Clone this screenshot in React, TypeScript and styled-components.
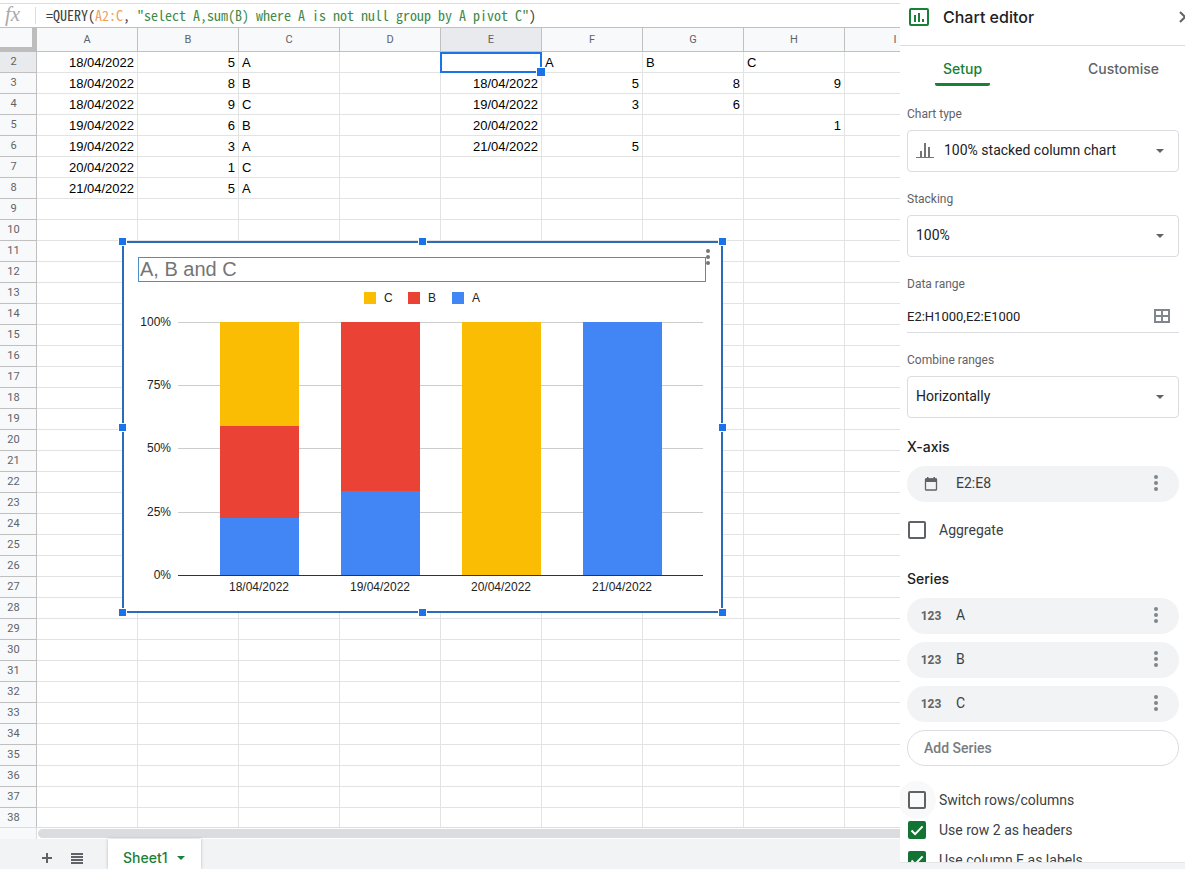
import React from "react";
import styled, { createGlobalStyle } from "styled-components";

const GlobalStyle = createGlobalStyle`
  * { box-sizing: border-box; }
  body { margin: 0; background: #fff; font-family: Roboto, Arial, sans-serif; color: #202124; }
  button, input, select { font: inherit; color: inherit; }
  button { border: 0; padding: 0; background: none; cursor: pointer; }
`;

const display = `Inter, Roboto, sans-serif`;

const Page = styled.div`
  display: flex;
  height: 100vh;
  overflow: hidden;
`;

/* ---------- spreadsheet ---------- */

const Workspace = styled.main`
  flex: 1;
  min-width: 0;
  display: flex;
  flex-direction: column;
  padding-top: 3px;
`;

const FormulaBar = styled.div`
  display: flex;
  align-items: center;
  flex: none;
  height: 25px;
  border-top: 1px solid #dadce0;
  border-bottom: 1px solid #c0c0c0;
  background: #fff;
`;

const Fx = styled.span`
  width: 36px;
  height: 17px;
  padding-left: 5px;
  border-right: 1px solid #dadce0;
  font: italic 21px/15px "Liberation Serif", serif;
  color: #a8abaf;
`;

const Formula = styled.code`
  padding: 0 0 2px 10px;
  font: 14px/20px "Noto Sans Mono CJK SC", "Liberation Mono", monospace;
  white-space: pre;
  color: #3c4043;
`;

const RangeToken = styled.span`
  color: #f0a060;
`;

const StringToken = styled.span`
  color: #3f8a4a;
`;

const Sheet = styled.div`
  position: relative;
  flex: 1;
  min-height: 0;
  overflow: hidden;
  border-bottom: 1px solid #dcdddf;
`;

const Grid = styled.table`
  width: 946px;
  table-layout: fixed;
  border-collapse: separate;
  border-spacing: 0;
  font: 13px/18px "Liberation Sans", Arial, sans-serif;
  color: #000;
`;

const Corner = styled.td`
  width: 37px;
  height: 24px;
  padding: 0;
  background: #f8f9fa;
  border-right: 5px solid #bdbdbd;
  border-bottom: 5px solid #bdbdbd;
`;

const ColumnHead = styled.th<{ $active: boolean }>`
  width: 101px;
  padding: 0;
  font: 11px/16px Roboto, sans-serif;
  color: #5f6368;
  background: ${(p) => (p.$active ? "#e8eaed" : "#f8f9fa")};
  border-right: 1px solid #c0c0c0;
  border-bottom: 1px solid #c0c0c0;
`;

const RowHead = styled.th<{ $active: boolean }>`
  height: 21px;
  padding: 0 9px 0 0;
  font: 11px/16px Roboto, sans-serif;
  color: #5f6368;
  background: ${(p) => (p.$active ? "#e8eaed" : "#f8f9fa")};
  border-right: 1px solid #c0c0c0;
  border-bottom: 1px solid #c0c0c0;
`;

const Cell = styled.td<{ $numeric: boolean }>`
  position: relative;
  height: 21px;
  padding: 2px 3px 0;
  text-align: ${(p) => (p.$numeric ? "right" : "left")};
  border-right: 1px solid #e2e3e3;
  border-bottom: 1px solid #e2e3e3;
`;

const Selection = styled.span`
  position: absolute;
  z-index: 1;
  inset: 0 -1px -1px -1px;
  border: 2px solid #1a73e8;

  &::after {
    content: "";
    position: absolute;
    right: -6px;
    bottom: -6px;
    width: 8px;
    height: 8px;
    background: #1a73e8;
    border: 1px solid #fff;
  }
`;

const ScrollTrack = styled.div`
  display: flex;
  flex: none;
  height: 11px;
  padding: 1px 0;
  background: #fff;
`;

const ScrollGutter = styled.div`
  width: 37px;
  margin: -1px 1px -1px 0;
  background: #f8f9fa;
  border-right: 1px solid #dadce0;
`;

const ScrollThumb = styled.div`
  flex: 1;
  border-radius: 5px 0 0 5px;
  background: #dadce0;
`;

const BottomBar = styled.footer`
  display: flex;
  align-items: stretch;
  flex: none;
  height: 30px;
  padding-left: 32px;
  background: #f1f3f4;
`;

const BarButton = styled.button`
  display: grid;
  place-items: center;
  width: 30px;
  padding-top: 8px;
  color: #5f6368;
`;

const SheetTab = styled.button`
  display: flex;
  align-items: center;
  gap: 9px;
  margin-left: 16px;
  padding: 8px 16px 0 15px;
  background: #fff;
  box-shadow: 0 0 3px rgba(60, 64, 67, 0.3);
  font: 500 14px/20px ${display};
  color: #188038;
`;

/* ---------- chart on the sheet ---------- */

const ChartFrame = styled.figure`
  position: absolute;
  z-index: 2;
  left: 122px;
  top: 213px;
  width: 601px;
  height: 372px;
  margin: 0;
  background: #fff;
  border: 2px solid #2b6cb8;

  svg { display: block; }
`;

const HandleLayer = styled.div`
  position: absolute;
  inset: -2px -1px -1px -2px;
  pointer-events: none;
`;

const Handle = styled.span<{ $x: string; $y: string }>`
  position: absolute;
  left: ${(p) => p.$x};
  top: ${(p) => p.$y};
  width: 9px;
  height: 9px;
  margin: -4px;
  background: #1a73e8;
  border: 1px solid #fff;
`;

const ChartMenu = styled.button`
  position: absolute;
  top: 5px;
  right: 7px;
  width: 12px;
  height: 18px;
  display: grid;
  place-items: center;
  color: #757575;
`;

/* ---------- editor panel ---------- */

const Side = styled.aside`
  display: flex;
  flex-direction: column;
  flex: none;
  width: 285px;
  background: #fff;
`;

const PanelBody = styled.div`
  flex: 1;
  min-height: 0;
  overflow: hidden;
`;

const SideFoot = styled.div`
  flex: none;
  height: 7px;
  background: #f1f3f4;
  border-top: 1px solid #e4e6e8;
`;

const PanelHeader = styled.header`
  display: flex;
  align-items: center;
  height: 46px;
  margin-right: -8px;
  padding: 0 0 12px 8px;
  border-bottom: 1px solid #dadce0;
`;

const PanelTitle = styled.h1`
  flex: 1;
  margin: 0 0 0 13px;
  font: 500 16px/24px ${display};
`;

const CloseButton = styled.button`
  display: grid;
  color: #5f6368;
`;

const Tabs = styled.div`
  display: flex;
  justify-content: space-between;
  padding: 0 18px 0 35px;
`;

const Tab = styled.button<{ $active: boolean }>`
  height: 40px;
  padding: 6px 8px 0;
  font: 500 14px/20px ${display};
  color: ${(p) => (p.$active ? "#188038" : "#5f6368")};
  background: ${(p) => (p.$active ? "linear-gradient(#188038, #188038) bottom / 100% 3px no-repeat" : "none")};
  border-radius: 2px;
`;

const Form = styled.form`
  display: flex;
  flex-direction: column;
  padding: 20px 6px 0 7px;
`;

const Field = styled.div`
  display: flex;
  flex-direction: column;
  gap: 8px;
  margin-bottom: 19px;
`;

const FieldLabel = styled.label`
  font-size: 12px;
  line-height: 16px;
  color: #5f6368;
`;

const Control = styled.div`
  position: relative;
  display: flex;
  align-items: center;
`;

const Select = styled.select<{ $icon?: boolean }>`
  appearance: none;
  width: 100%;
  height: 42px;
  padding: 0 32px 2px ${(p) => (p.$icon ? "36px" : "8px")};
  background: #fff;
  border: 1px solid #dadce0;
  border-radius: 4px;
  font-size: 14px;
`;

const LeadIcon = styled.span`
  position: absolute;
  left: 9px;
  display: grid;
  color: #757575;
  pointer-events: none;
`;

const CaretSlot = styled.span`
  position: absolute;
  right: 15px;
  display: grid;
  color: #5f6368;
  pointer-events: none;
`;

const RangeBox = styled.div`
  display: flex;
  align-items: center;
  height: 33px;
  padding-right: 9px;
  border-bottom: 1px solid #dadce0;
`;

const RangeInput = styled.input`
  flex: 1;
  min-width: 0;
  padding: 0;
  border: 0;
  outline: 0;
  font-size: 13px;
`;

const IconButton = styled.button`
  display: grid;
  color: #80868b;
`;

const SectionTitle = styled.h2`
  margin: 0 0 9px;
  font: 500 14px/20px ${display};
`;

const PillList = styled.div`
  display: flex;
  flex-direction: column;
  gap: 8px;
`;

const Pill = styled.div`
  display: flex;
  align-items: center;
  height: 36px;
  padding: 0 20px 0 13px;
  border-radius: 18px;
  background: #f1f3f4;
  font-size: 14px;
  line-height: 20px;
  color: #3c4043;

  & > :last-child { padding-bottom: 2px; }
`;

const PillIcon = styled.span`
  display: grid;
  place-items: center;
  width: 22px;
  margin-right: 14px;
  font: 700 12px/16px Roboto, sans-serif;
  color: #5f6368;
`;

const PillName = styled.button`
  flex: 1;
  padding-bottom: 2px;
  text-align: left;
`;

const AddSeries = styled.button`
  height: 36px;
  padding: 0 16px;
  border: 1px solid #dadce0;
  border-radius: 18px;
  text-align: left;
  font-size: 14px;
  font-weight: 500;
  color: #777c81;
`;

const Options = styled.div<{ $before: number; $after: number }>`
  padding-top: ${(p) => p.$before}px;
  padding-bottom: ${(p) => p.$after}px;
`;

const Option = styled.label`
  display: flex;
  align-items: center;
  gap: 13px;
  height: 30px;
  padding-left: 1px;
  font-size: 14px;
  color: #3c4043;
`;

const BoxWrap = styled.span`
  position: relative;
  display: grid;
  place-items: center;
  width: 18px;
  height: 18px;

  svg { position: absolute; pointer-events: none; }
`;

const Checkbox = styled.input`
  appearance: none;
  width: 18px;
  height: 18px;
  margin: 0;
  border: 2px solid #5f6368;
  border-radius: 2px;

  &:checked { background: #137333; border-color: #137333; }
`;

const Halo = styled.span`
  position: absolute;
  inset: -10px;
  border-radius: 50%;
  background: rgba(60, 64, 67, 0.03);
  pointer-events: none;
`;

/* ---------- icons ---------- */

const Dots = () => (
  <svg width="6" height="18" viewBox="0 0 6 18" fill="currentColor" aria-hidden="true">
    <circle cx="3" cy="3" r="2" />
    <circle cx="3" cy="9" r="2" />
    <circle cx="3" cy="15" r="2" />
  </svg>
);

const Caret = () => (
  <svg width="8" height="4" viewBox="0 0 8 4" fill="currentColor" aria-hidden="true">
    <path d="M0 0h8L4 4z" />
  </svg>
);

const Check = () => (
  <svg width="18" height="18" viewBox="0 0 18 18" fill="none" stroke="#fff" strokeWidth="2" aria-hidden="true">
    <path d="M3.5 9.5l3.6 3.6L14.6 5.4" />
  </svg>
);

const ChartLogo = () => (
  <svg width="22" height="22" viewBox="0 0 22 22" fill="none" stroke="#188038" strokeWidth="2" aria-hidden="true">
    <rect x="2" y="3" width="18" height="16" rx="1" />
    <path d="M7 9v7M11 7v9M15 13v3" />
  </svg>
);

const ColumnsIcon = () => (
  <svg width="18" height="16" viewBox="0 0 18 16" fill="none" stroke="currentColor" strokeWidth="2" aria-hidden="true">
    <path d="M0 14.500h18" strokeWidth="1" />
    <path d="M5 8v6M9 0v14M13 4v10" />
  </svg>
);

const CalendarIcon = () => (
  <svg width="14" height="14" viewBox="0 0 14 14" aria-hidden="true">
    <path d="M1.500 1.500h11v3.500h-11zM3 0h1.500v2H3zM9.500 0H11v2H9.500z" fill="currentColor" />
    <rect x="1.500" y="2" width="11" height="11" rx="0.500" fill="none" stroke="currentColor" strokeWidth="1.300" />
  </svg>
);

const GridIcon = () => (
  <svg width="16" height="14" viewBox="0 0 16 14" fill="none" stroke="currentColor" strokeWidth="2" aria-hidden="true">
    <path d="M1 1h14v12H1zM8 1v12M1 7h14" />
  </svg>
);

/* ---------- data ---------- */

const columns = ["A", "B", "C", "D", "E", "F", "G", "H", "I"];
const rowNumbers = Array.from({ length: 37 }, (_, i) => i + 2);

const cells: Record<number, Record<string, string>> = {
  2: { A: "18/04/2022", B: "5", C: "A", F: "A", G: "B", H: "C" },
  3: { A: "18/04/2022", B: "8", C: "B", E: "18/04/2022", F: "5", G: "8", H: "9" },
  4: { A: "18/04/2022", B: "9", C: "C", E: "19/04/2022", F: "3", G: "6" },
  5: { A: "19/04/2022", B: "6", C: "B", E: "20/04/2022", H: "1" },
  6: { A: "19/04/2022", B: "3", C: "A", E: "21/04/2022", F: "5" },
  7: { A: "20/04/2022", B: "1", C: "C" },
  8: { A: "21/04/2022", B: "5", C: "A" },
};

const seriesColors = { A: "#4285f4", B: "#ea4335", C: "#fbbc04" };
type SeriesName = keyof typeof seriesColors;

const bars: { date: string; values: Partial<Record<SeriesName, number>> }[] = [
  { date: "18/04/2022", values: { A: 5, B: 8, C: 9 } },
  { date: "19/04/2022", values: { A: 3, B: 6 } },
  { date: "20/04/2022", values: { C: 1 } },
  { date: "21/04/2022", values: { A: 5 } },
];

const handles = [
  ["0%", "0%"], ["50%", "0%"], ["100%", "0%"],
  ["0%", "50%"], ["100%", "50%"],
  ["0%", "100%"], ["50%", "100%"], ["100%", "100%"],
];

const plot = { left: 54, right: 579, bottom: 332, height: 253, barWidth: 79, firstBar: 96, step: 121 };

const ticks = [
  { label: "100%", y: 79 },
  { label: "75%", y: 142 },
  { label: "50%", y: 205 },
  { label: "25%", y: 269 },
  { label: "0%", y: 332 },
];

const StackedChart = () => (
  <svg width="597" height="368" viewBox="0 0 597 368" fontFamily="Liberation Sans, Arial, sans-serif" fontSize="12" role="img" aria-label="A, B and C">
    <rect x="14.5" y="14.5" width="567" height="24" fill="none" stroke="#4a8fc7" />
    <text x="16" y="33" fontSize="20" fill="#757575">A, B and C</text>
    {(["C", "B", "A"] as SeriesName[]).map((name, i) => (
      <g key={name}>
        <rect x={240 + i * 44} y="49" width="12" height="12" fill={seriesColors[name]} />
        <text x={260 + i * 44} y="59" fill="#222">{name}</text>
      </g>
    ))}
    {ticks.map(({ label, y }) => (
      <g key={label}>
        <path d={`M${plot.left} ${y + 0.5}H${plot.right}`} stroke={y === plot.bottom ? "#333" : "#ccc"} />
        <text x="47" y={y + 4} textAnchor="end" fill="#222">{label}</text>
      </g>
    ))}
    {bars.map((bar, i) => {
      const x = plot.firstBar + i * plot.step;
      const total = Object.values(bar.values).reduce((a, b) => a + b, 0);
      let sum = 0;
      return (
        <g key={bar.date}>
          {(["A", "B", "C"] as SeriesName[]).map((name) => {
            const from = Math.floor((sum / total) * plot.height);
            sum += bar.values[name] ?? 0;
            const to = Math.floor((sum / total) * plot.height);
            return to > from ? (
              <rect key={name} x={x} y={plot.bottom - to} width={plot.barWidth} height={to - from} fill={seriesColors[name]} />
            ) : null;
          })}
          <text x={x + 39} y="348" textAnchor="middle" fill="#222">{bar.date}</text>
        </g>
      );
    })}
  </svg>
);

/* ---------- page ---------- */

const SelectField = ({ id, label, value, icon }: { id: string; label: string; value: string; icon?: React.ReactNode }) => (
  <Field>
    <FieldLabel htmlFor={id}>{label}</FieldLabel>
    <Control>
      {icon && <LeadIcon>{icon}</LeadIcon>}
      <Select id={id} $icon={!!icon} defaultValue={value}>
        <option>{value}</option>
      </Select>
      <CaretSlot><Caret /></CaretSlot>
    </Control>
  </Field>
);

const DataPill = ({ icon, name }: { icon: React.ReactNode; name: string }) => (
  <Pill>
    <PillIcon>{icon}</PillIcon>
    <PillName type="button">{name}</PillName>
    <IconButton type="button" aria-label={`More options for ${name}`}><Dots /></IconButton>
  </Pill>
);

const CheckOption = ({ label, checked, halo }: { label: string; checked?: boolean; halo?: boolean }) => (
  <Option>
    <BoxWrap>
      {halo && <Halo />}
      <Checkbox type="checkbox" defaultChecked={checked} />
      {checked && <Check />}
    </BoxWrap>
    {label}
  </Option>
);

export default function App() {
  return (
    <Page>
      <GlobalStyle />
      <Workspace>
        <FormulaBar>
          <Fx>fx</Fx>
          <Formula>
            =QUERY(<RangeToken>A2:C</RangeToken>, <StringToken>"select A,sum(B) where A is not null group by A pivot C"</StringToken>)
          </Formula>
        </FormulaBar>
        <Sheet>
          <Grid>
            <thead>
              <tr>
                <Corner />
                {columns.map((c) => <ColumnHead key={c} scope="col" $active={c === "E"}>{c}</ColumnHead>)}
              </tr>
            </thead>
            <tbody>
              {rowNumbers.map((n) => (
                <tr key={n}>
                  <RowHead scope="row" $active={n === 2}>{n}</RowHead>
                  {columns.map((c) => {
                    const value = cells[n]?.[c] ?? "";
                    return (
                      <Cell key={c} $numeric={/^\d/.test(value)}>
                        {value}
                        {n === 2 && c === "E" && <Selection />}
                      </Cell>
                    );
                  })}
                </tr>
              ))}
            </tbody>
          </Grid>
          <ChartFrame>
            <StackedChart />
            <ChartMenu aria-label="Chart options"><Dots /></ChartMenu>
            <HandleLayer>
              {handles.map(([x, y]) => <Handle key={x + y} $x={x} $y={y} />)}
            </HandleLayer>
          </ChartFrame>
        </Sheet>
        <ScrollTrack>
          <ScrollGutter />
          <ScrollThumb />
        </ScrollTrack>
        <BottomBar>
          <BarButton aria-label="Add sheet">
            <svg width="10" height="10" viewBox="0 0 10 10" stroke="currentColor" strokeWidth="2"><path d="M5 0v10M0 5h10" /></svg>
          </BarButton>
          <BarButton aria-label="All sheets">
            <svg width="12" height="11" viewBox="0 0 12 11" stroke="currentColor" strokeWidth="2"><path d="M0 1h12M0 4h12M0 7h12M0 10h12" /></svg>
          </BarButton>
          <SheetTab>Sheet1 <Caret /></SheetTab>
        </BottomBar>
      </Workspace>
      <Side>
        <PanelBody>
          <PanelHeader>
            <ChartLogo />
            <PanelTitle>Chart editor</PanelTitle>
            <CloseButton aria-label="Close">
              <svg width="14" height="12" viewBox="0 0 14 12" fill="none" stroke="currentColor" strokeWidth="2"><path d="M1 1l10 10M11 1L1 11" /></svg>
            </CloseButton>
          </PanelHeader>
          <Tabs role="tablist">
            <Tab role="tab" aria-selected="true" $active>Setup</Tab>
            <Tab role="tab" aria-selected="false" $active={false}>Customise</Tab>
          </Tabs>
          <Form>
            <SelectField id="type" label="Chart type" value="100% stacked column chart" icon={<ColumnsIcon />} />
            <SelectField id="stacking" label="Stacking" value="100%" />
            <Field>
              <FieldLabel htmlFor="range">Data range</FieldLabel>
              <RangeBox>
                <RangeInput id="range" defaultValue="E2:H1000,E2:E1000" />
                <IconButton type="button" aria-label="Select data range"><GridIcon /></IconButton>
              </RangeBox>
            </Field>
            <SelectField id="combine" label="Combine ranges" value="Horizontally" />
            <SectionTitle>X-axis</SectionTitle>
            <DataPill icon={<CalendarIcon />} name="E2:E8" />
            <Options $before={13} $after={24}>
              <CheckOption label="Aggregate" />
            </Options>
            <SectionTitle>Series</SectionTitle>
            <PillList>
              {["A", "B", "C"].map((s) => <DataPill key={s} icon="123" name={s} />)}
              <AddSeries type="button">Add Series</AddSeries>
            </PillList>
            <Options $before={19} $after={24}>
              <CheckOption label="Switch rows/columns" halo />
              <CheckOption label="Use row 2 as headers" checked />
              <CheckOption label="Use column E as labels" checked />
            </Options>
          </Form>
        </PanelBody>
        <SideFoot />
      </Side>
    </Page>
  );
}
